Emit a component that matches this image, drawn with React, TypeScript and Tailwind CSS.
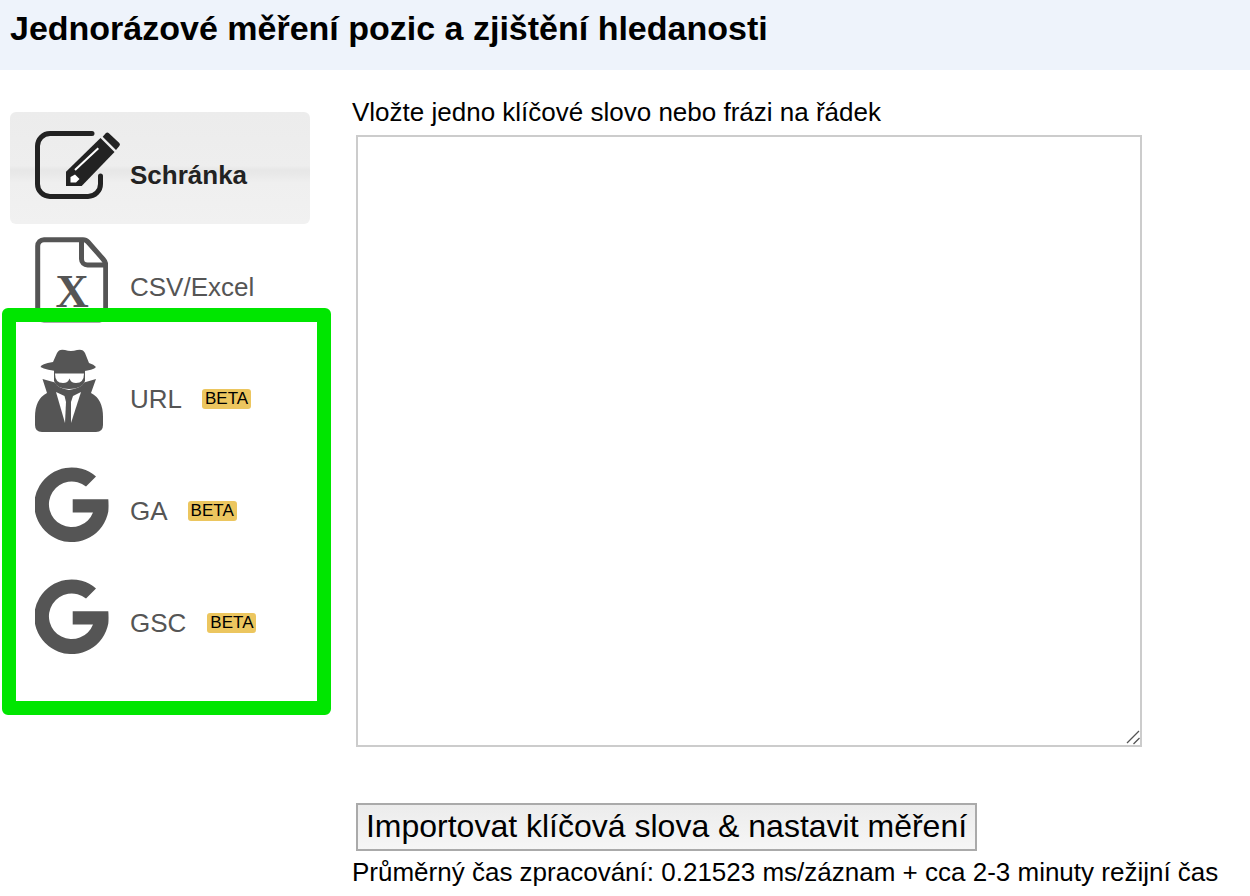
import type { ReactNode } from "react";

function EditIcon() {
  return (
    <svg viewBox="5 5 86 70" className="mb-[6px] h-[70px] w-[86px]">
      <path d="M62 8.5H20A12.5 12.5 0 0 0 7.5 21v38A12.5 12.5 0 0 0 20 71.5h38A12.5 12.5 0 0 0 70.5 59v-8" fill="none" stroke="#222222" strokeWidth="5" strokeLinecap="round" />
      <path d="M72.7 11.7l3-3.4q1.6-1.6 3.2 0l10.4 9.6q1.4 1.4 0 3L86 25z" fill="#222222" />
      <path d="M36 46.7L70.5 13l14 14L51.7 61H36z" fill="#222222" />
      <path d="M45 45l23.3-21.7" fill="none" stroke="#ffffff" strokeWidth="2" />
      <path d="M40.5 52l4.5-2.5 4.5 4.5-3.5 3.5h-5.5z" fill="#ffffff" />
    </svg>
  );
}

function ExcelIcon() {
  return (
    <svg viewBox="5 5 73 86" className="h-[86px] w-[73px]">
      <path d="M14 7.7H53Q56 7.7 58 10L73 27Q75.7 30 75.7 33V82a6 6 0 0 1-6 6H14a6.3 6.3 0 0 1-6.3-6.3V14A6.3 6.3 0 0 1 14 7.7Z" fill="none" stroke="#555555" strokeWidth="5" />
      <path d="M51.5 8V27a6 6 0 0 0 6 6H75.5" fill="none" stroke="#555555" strokeWidth="5" />
      <text x="42" y="75" textAnchor="middle" fontFamily="'Liberation Serif', serif" fontWeight="700" fontSize="46" fill="#555555">X</text>
    </svg>
  );
}

function SpyIcon() {
  return (
    <svg viewBox="5 4 68 83" className="mb-[3px] h-[83px] w-[68px]">
      <path d="M23 17L27 8Q29 3.5 35 5Q41 7 47 5Q53 3.5 55 8L59 18Q64 19.5 66 22Q64 25 50 26.5H31Q16 25 10.5 22Q11 19 23 17Z" fill="#555555" />
      <path d="M24 25H55V36Q52 44 39 44Q27 44 24 36Z" fill="#555555" />
      <path d="M12.5 34L25 37.5Q27 43 39 45Q52 43 54 37.5L66 34L61 48Q73 54 73 72V80Q73 87 66 87H12Q5 87 5 80V72Q5 54 17 48Z" fill="#555555" />
      <path d="M25 28.5H54Q54 38 46 38Q41 38 39.5 33.5Q38 38 33 38Q25 38 25 28.5Z" fill="#ffffff" />
      <path d="M26 47L34.5 51L36 57L35 78Z" fill="#ffffff" />
      <path d="M51 47L43 51L41 57L41 78Z" fill="#ffffff" />
    </svg>
  );
}

function GoogleIcon() {
  return (
    <svg viewBox="4 4.5 74 75" className="h-[75px] w-[74px]">
      <path d="M65 14A37.3 37.3 0 1 0 77.3 49Q77.8 43 77.3 36.7H41.7V50H62A22.8 22.8 0 1 1 55 24Z" fill="#555555" />
    </svg>
  );
}

function Beta({ className }: { className: string }) {
  return <span className={`rounded-[3px] bg-[#ecc65f] px-[3px] text-[17px] leading-[20px] text-black ${className}`}>BETA</span>;
}

function Tab({ icon, label, active, children }: { icon: ReactNode; label: string; active?: boolean; children?: ReactNode }) {
  return (
    <div className={`flex h-[112px] w-[300px] items-center rounded-[6px] pl-[25px] ${active ? "bg-[linear-gradient(#ececec_0%,#eeeeee_48%,#e7e7e7_52%,#e9e9e9_56%,#efefef_63%,#f1f1f1_100%)]" : ""}`}>
      <div className="flex w-[95px] shrink-0 items-center">{icon}</div>
      <span className={`mt-[14px] text-[26px] leading-[30px] ${active ? "font-bold text-[#222222]" : "text-[#555555]"}`}>{label}</span>
      {children}
    </div>
  );
}

export default function App() {
  return (
    <div className="relative h-[896px] w-[1250px] overflow-hidden bg-white font-['Liberation_Sans',Arial,sans-serif] text-black">
      <header className="flex h-[70px] items-center bg-[#eef3fb] pb-[15px] pl-[10px]">
        <h1 className="text-[34px] font-bold leading-[36px]">Jednorázové měření pozic a zjištění hledanosti</h1>
      </header>
      <div className="flex">
        <aside className="w-[342px] shrink-0 pl-[10px] pt-[42px]">
          <Tab active label="Schránka" icon={<EditIcon />} />
          <Tab label="CSV/Excel" icon={<ExcelIcon />} />
          <Tab label="URL" icon={<SpyIcon />}>
            <Beta className="ml-[20px] mt-[14px]" />
          </Tab>
          <Tab label="GA" icon={<GoogleIcon />}>
            <Beta className="ml-[20px] mt-[14px]" />
          </Tab>
          <Tab label="GSC" icon={<GoogleIcon />}>
            <Beta className="ml-[21px] mt-[14px]" />
          </Tab>
        </aside>
        <main className="pl-[10px] pt-[27px]">
          <p className="whitespace-nowrap text-[26px] leading-[30px]">Vložte jedno klíčové slovo nebo frázi na řádek</p>
          <div className="relative ml-[4px] mt-[8px] h-[612px] w-[786px]">
            <textarea readOnly className="block h-full w-full resize-none border-2 border-[#cccccc] bg-white outline-none" />
            <svg viewBox="0 0 16 16" className="absolute bottom-[2px] right-[2px] h-[16px] w-[16px]">
              <path d="M3 14L15 2M9.5 15L15.5 9" fill="none" stroke="#555555" strokeWidth="1.3" />
            </svg>
          </div>
          <button className="ml-[4px] mt-[56px] block h-[48px] w-[621px] whitespace-nowrap border-2 border-[#aaaaaa] bg-[linear-gradient(#ececec,#f6f6f6)] pb-[3px] text-[32px] leading-[40px]">
            Importovat klíčová slova &amp; nastavit měření
          </button>
          <p className="mt-[6px] whitespace-nowrap text-[26px] leading-[30px]">Průměrný čas zpracování: 0.21523 ms/záznam + cca 2-3 minuty režijní čas</p>
        </main>
      </div>
      <div className="absolute left-[2px] top-[308px] h-[407px] w-[329px] rounded-[6px] border-[14px] border-[#00e600]" />
    </div>
  );
}
